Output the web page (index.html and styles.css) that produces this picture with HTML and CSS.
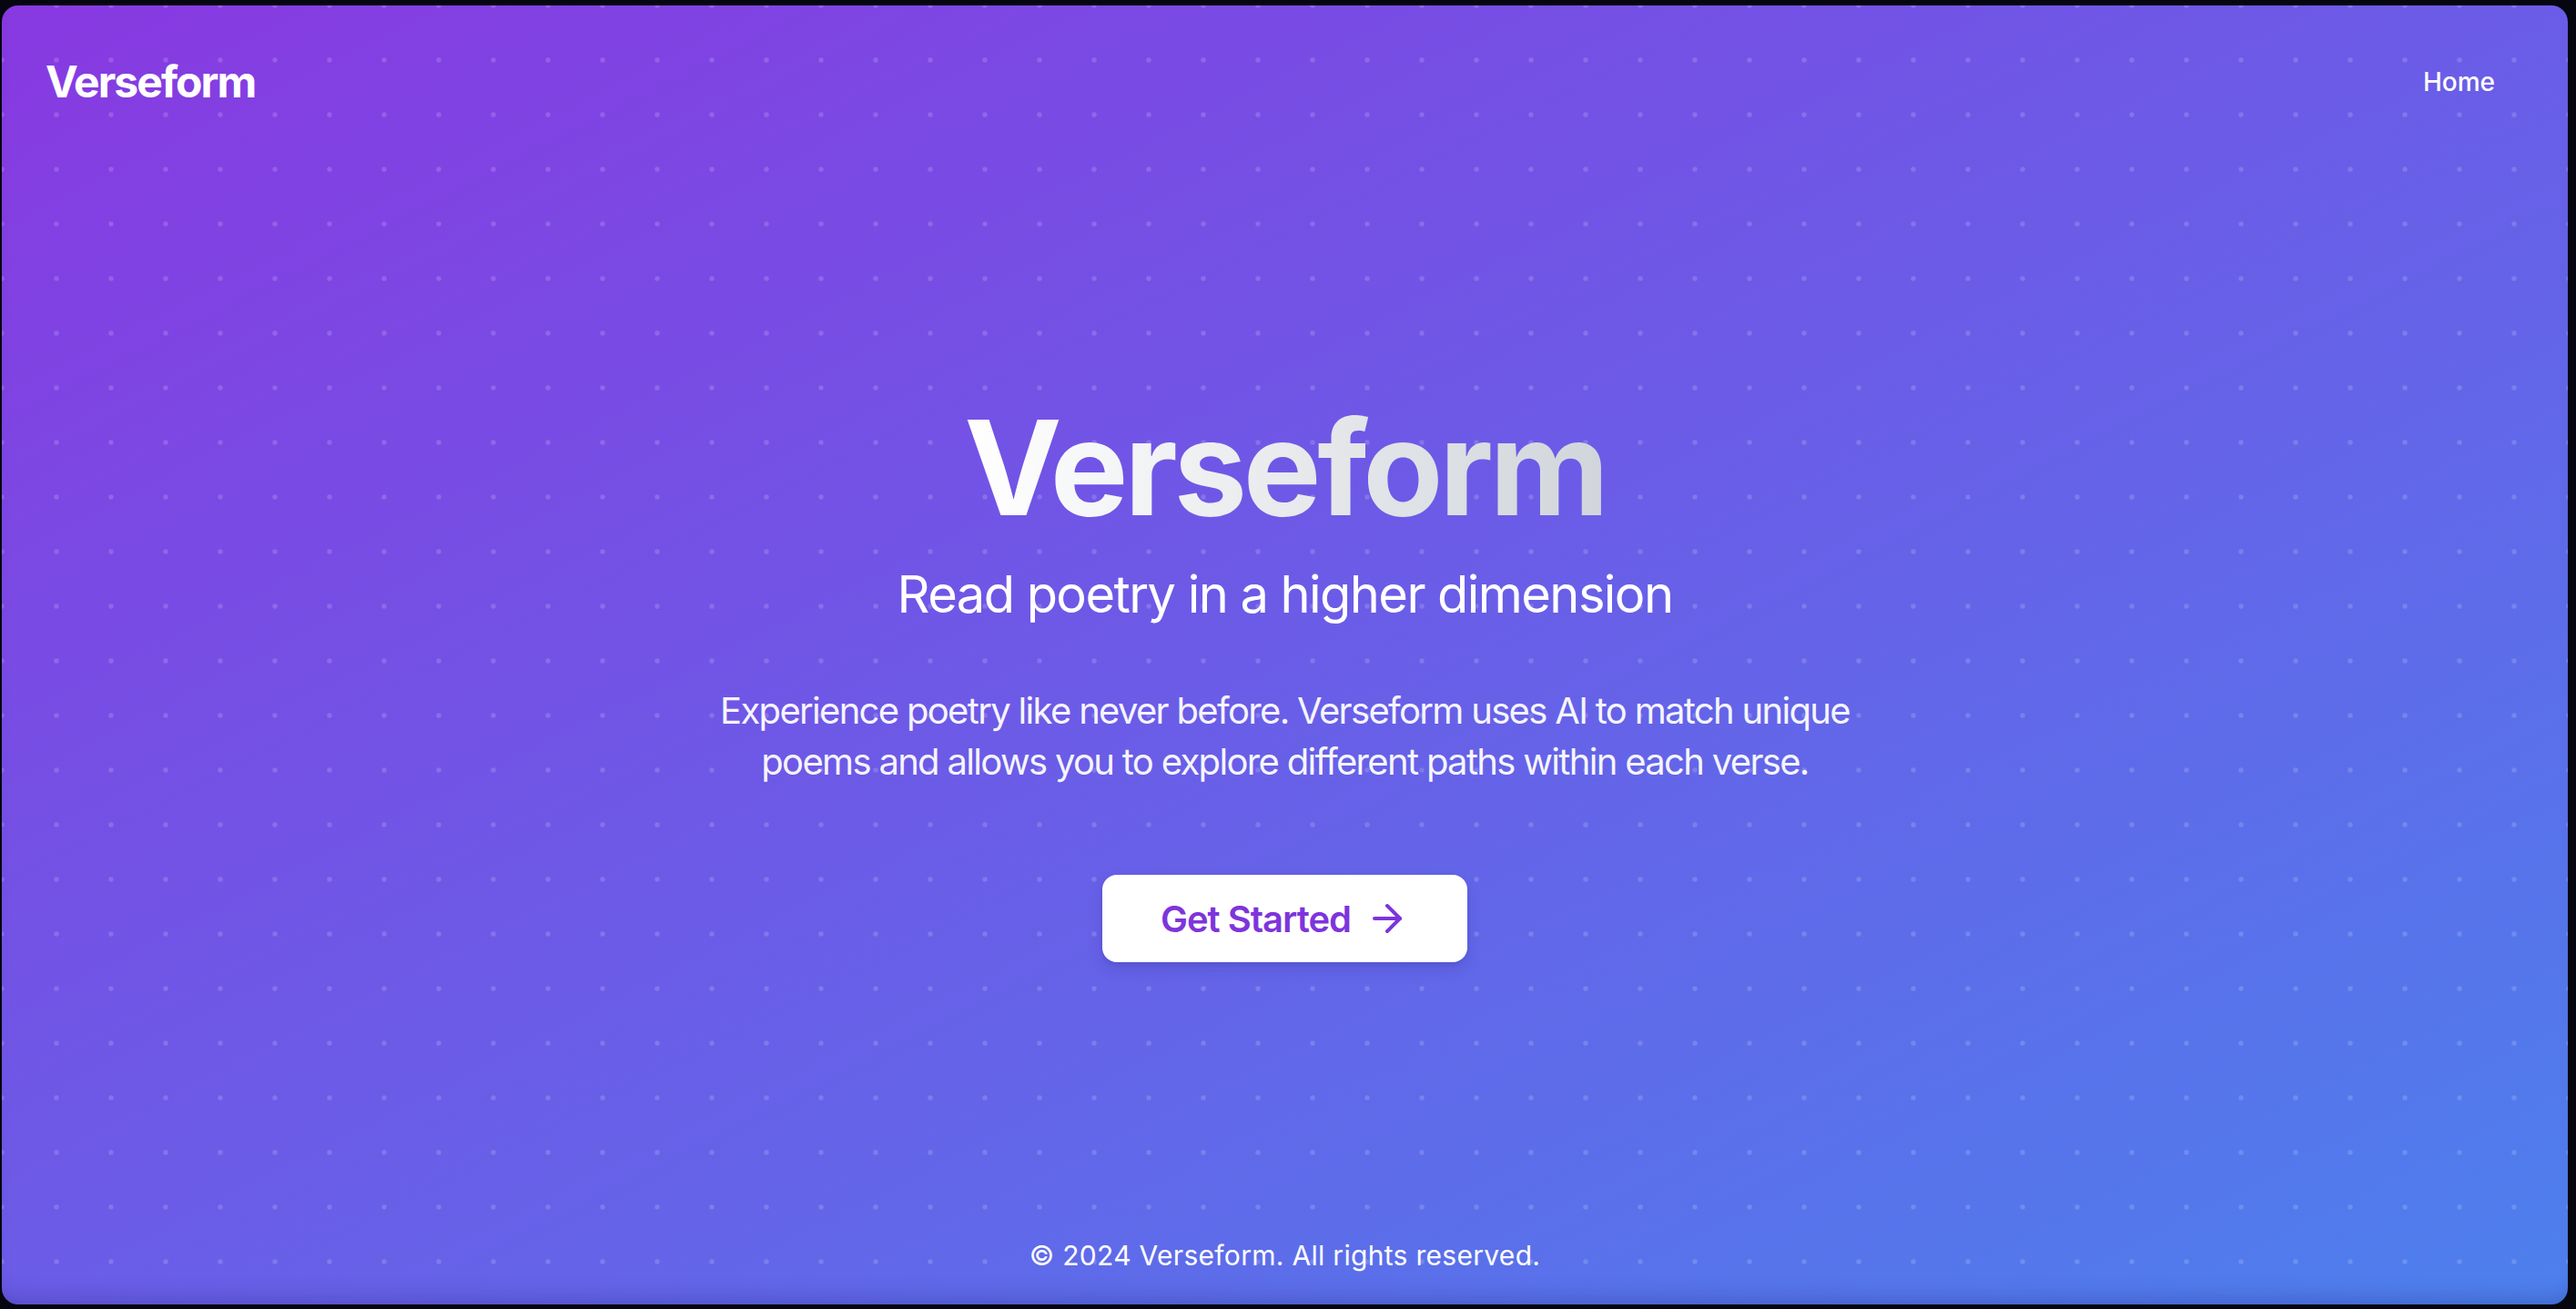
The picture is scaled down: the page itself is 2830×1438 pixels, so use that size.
FILE: index.html
```html
<!DOCTYPE html>
<html lang="en">
<head>
<meta charset="utf-8">
<title>Verseform</title>
<link rel="stylesheet" href="styles.css">
</head>
<body>
<div class="panel">
  <nav class="nav">
    <a class="logo" href="#">Verseform</a>
    <a class="nav-link" href="#">Home</a>
  </nav>
  <main class="hero">
    <h1 class="hero-title">Verseform</h1>
    <p class="hero-subtitle">Read poetry in a higher dimension</p>
    <p class="hero-text">Experience poetry like never before. Verseform uses AI to match unique poems and allows you to explore different paths within each verse.</p>
    <a class="cta" href="#">
      <span>Get Started</span>
      <svg class="cta-icon" viewBox="0 0 24 24" fill="none" stroke="currentColor" stroke-width="2" stroke-linecap="round" stroke-linejoin="round"><path d="M5 12h14"/><path d="M12 5l7 7-7 7"/></svg>
    </a>
  </main>
  <footer class="footer">© 2024 Verseform. All rights reserved.</footer>
</div>
</body>
</html>
```

FILE: styles.css
```css
html, body {
  margin: 0;
  height: 100%;
}

body {
  background: #05060f;
  padding: 6px 9px 5px 2px;
  box-sizing: border-box;
  font-family: Inter, "Noto Sans", "Liberation Sans", sans-serif;
  color: #ffffff;
}

.panel {
  height: 1427px;
  border-radius: 18px;
  overflow: hidden;
  display: flex;
  flex-direction: column;
  background-color: #6a5ce7;
  background-image:
    radial-gradient(circle, rgba(255, 255, 255, 0.16) 2px, rgba(255, 255, 255, 0) 3.5px),
    linear-gradient(to bottom right, #8839e1, #4d80ed);
  background-size: 60px 60px, 100% 100%;
  background-position: -30px -30px, 0 0;
  box-shadow: inset 0 -22px 24px -18px rgba(20, 20, 80, 0.25);
}

.nav {
  height: 168px;
  flex: none;
  display: flex;
  align-items: center;
  justify-content: space-between;
  padding: 0 48px;
}

.logo {
  font-size: 48px;
  line-height: 64px;
  font-weight: 700;
  letter-spacing: -0.04em;
  color: #ffffff;
  text-decoration: none;
}

.nav-link {
  font-size: 28px;
  line-height: 40px;
  font-weight: 500;
  color: #ffffff;
  text-decoration: none;
  padding: 0 32px;
}

.hero {
  flex: 1;
  display: flex;
  flex-direction: column;
  align-items: center;
  text-align: center;
  padding-top: 268px;
}

.hero-title {
  margin: 0;
  font-size: 144px;
  line-height: 144px;
  font-weight: 700;
  letter-spacing: -0.03em;
  background: linear-gradient(to right, #ffffff, #d1d5db);
  -webkit-background-clip: text;
  background-clip: text;
  color: transparent;
}

.hero-subtitle {
  margin: 31px 0 0;
  font-size: 56px;
  line-height: 72px;
  font-weight: 400;
  letter-spacing: -0.028em;
  color: #ffffff;
}

.hero-text {
  margin: 64px 0 0;
  max-width: 1344px;
  font-size: 40px;
  line-height: 56px;
  font-weight: 400;
  letter-spacing: -0.042em;
  color: rgba(255, 255, 255, 0.95);
}

.cta {
  margin-top: 96px;
  display: flex;
  align-items: center;
  gap: 16px;
  height: 96px;
  box-sizing: border-box;
  padding: 0 64px;
  background: #ffffff;
  border-radius: 16px;
  color: #7e34dc;
  font-size: 40px;
  font-weight: 600;
  letter-spacing: -0.025em;
  text-decoration: none;
  box-shadow: 0 8px 16px rgba(40, 30, 120, 0.15), 0 2px 4px rgba(40, 30, 120, 0.1);
}

.cta-icon {
  width: 48px;
  height: 48px;
  flex: none;
}

.footer {
  flex: none;
  text-align: center;
  font-size: 30px;
  line-height: 40px;
  letter-spacing: 0.01em;
  padding-bottom: 34px;
  color: #ffffff;
}
```
